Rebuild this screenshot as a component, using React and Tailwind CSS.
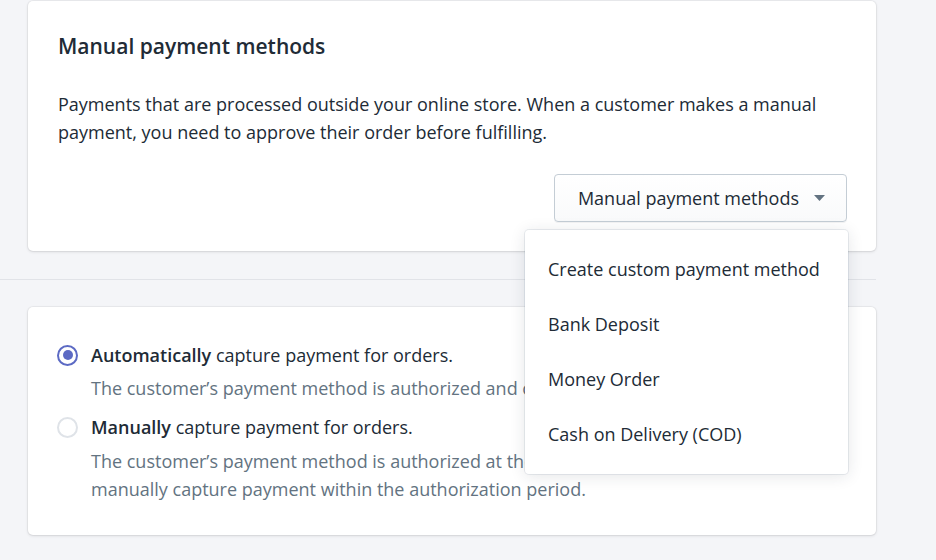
import { useState } from "react";

const menuItems = [
  "Create custom payment method",
  "Bank Deposit",
  "Money Order",
  "Cash on Delivery (COD)",
];

function Radio({ checked }) {
  return (
    <span
      className={
        "flex h-[21px] w-[21px] shrink-0 items-center justify-center rounded-full border-2 bg-white " +
        (checked ? "border-[#5c6ac4]" : "border-[#dfe3e8]")
      }
    >
      {checked && <span className="h-[10px] w-[10px] rounded-full bg-[#5c6ac4]" />}
    </span>
  );
}

export default function App() {
  const [capture, setCapture] = useState("auto");

  return (
    <div
      className="min-h-[560px] w-[936px] bg-[#f4f5f8] text-[#212b36]"
      style={{ fontFamily: '"Open Sans", "Noto Sans", sans-serif' }}
    >
      <div className="w-[876px] pt-px">
        {/* manual payment methods card */}
        <div className="ml-[28px] rounded-[5px] bg-white px-[30px] pt-[33px] pb-[29px] shadow-[0_0_0_1px_rgba(63,63,68,0.05),0_1px_3px_0_rgba(63,63,68,0.15)]">
          <h2 className="text-[21px] leading-[24px] font-semibold">Manual payment methods</h2>
          <p className="mt-[32px] text-[18px] leading-[28px]">
            Payments that are processed outside your online store. When a customer makes a manual
            <br />
            payment, you need to approve their order before fulfilling.
          </p>
          <div className="mt-[28px] flex justify-end">
            <div className="relative mr-[-1px]">
              <button className="flex h-[48px] items-center gap-[15px] rounded-[4px] border border-[#c4cdd5] bg-gradient-to-b from-white to-[#f9fafb] pr-[21px] pl-[23px] text-[18px] text-[#212b36] shadow-[0_1px_0_0_rgba(22,29,37,0.05)]">
                Manual payment methods
                <svg width="11" height="6" viewBox="0 0 11 6">
                  <path d="M0 0h11L5.5 6z" fill="#637381" />
                </svg>
              </button>
              <div className="absolute top-[calc(100%+8px)] right-[-1px] z-10 w-[323px] rounded-[4px] bg-white py-[12px] shadow-[0_0_0_1px_rgba(6,44,82,0.08),0_2px_16px_rgba(33,43,54,0.12)]">
                {menuItems.map((item) => (
                  <div key={item} className="flex h-[55px] items-center px-[23px] text-[18px] text-[#212b36]">
                    {item}
                  </div>
                ))}
              </div>
            </div>
          </div>
        </div>

        <div className="mt-[28px] border-t border-[#e1e3e8]" />

        {/* capture settings card */}
        <div className="mt-[27px] ml-[28px] rounded-[5px] bg-white px-[29px] pt-[34px] pb-[32px] shadow-[0_0_0_1px_rgba(63,63,68,0.05),0_1px_3px_0_rgba(63,63,68,0.15)]">
          <label className="flex cursor-pointer items-center gap-[13px] leading-[28px]" onClick={() => setCapture("auto")}>
            <Radio checked={capture === "auto"} />
            <span className="text-[18px]">
              <span className="font-semibold">Automatically</span> capture payment for orders.
            </span>
          </label>
          <p className="mt-[5px] pl-[34px] text-[18px] leading-[28px] text-[#637381]">
            The customer’s payment method is authorized and charged automatically.
          </p>
          <label className="mt-[11px] flex cursor-pointer items-center gap-[13px] leading-[28px]" onClick={() => setCapture("manual")}>
            <Radio checked={capture === "manual"} />
            <span className="text-[18px]">
              <span className="font-semibold">Manually</span> capture payment for orders.
            </span>
          </label>
          <p className="mt-[6px] pl-[34px] text-[18px] leading-[28px] text-[#637381]">
            The customer’s payment method is authorized at the time of their order. You’ll need to
            <br />
            manually capture payment within the authorization period.
          </p>
        </div>
      </div>
    </div>
  );
}
